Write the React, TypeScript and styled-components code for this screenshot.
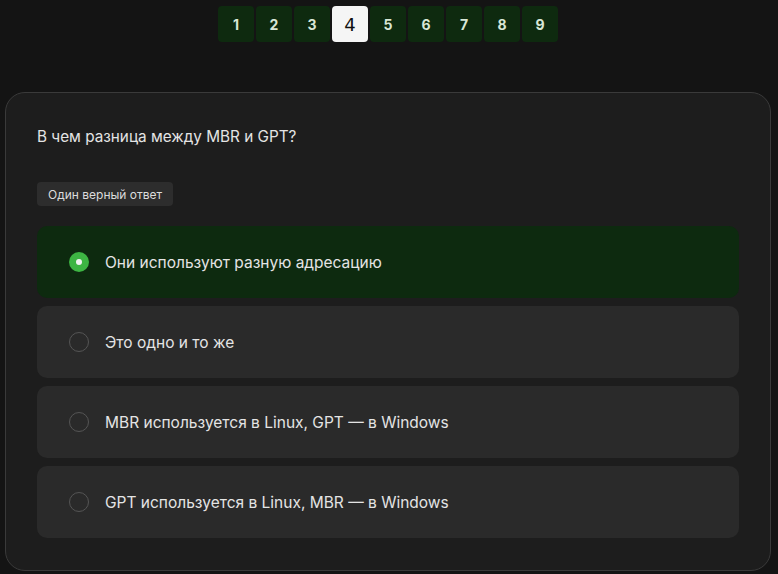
import React from "react";
import styled, { createGlobalStyle } from "styled-components";

const Global = createGlobalStyle`
  html, body { margin: 0; padding: 0; background: #141414; }
  body { font-family: Inter, "Noto Sans", sans-serif; color: #e6e6e6; }
  * { box-sizing: border-box; }
`;

const Page = styled.div`
  width: 778px;
  height: 574px;
  padding: 6px 7px 0 5px;
  display: flex;
  flex-direction: column;
  align-items: center;
  overflow: hidden;
`;

const Pager = styled.nav`
  display: flex;
  gap: 2px;
`;

const PageButton = styled.div<{ $active?: boolean }>`
  width: 36px;
  height: 36px;
  border-radius: 4px;
  display: flex;
  align-items: center;
  justify-content: center;
  background: ${(p) => (p.$active ? "#f5f5f5" : "#0e2a0f")};
  color: ${(p) => (p.$active ? "#111" : "#d8e6d6")};
  font-family: ${(p) => (p.$active ? "\"DejaVu Sans\", sans-serif" : "Inter, sans-serif")};
  font-size: ${(p) => (p.$active ? "18px" : "14px")};
  font-weight: ${(p) => (p.$active ? 400 : 700)};
`;

const Card = styled.section`
  margin-top: 50px;
  width: 766px;
  align-self: flex-start;
  background: #1d1d1d;
  border: 1px solid #3a3a3a;
  border-radius: 20px;
  padding: 33px 31px 32px 31px;
  display: flex;
  flex-direction: column;
`;

const Question = styled.h2`
  margin: 0;
  font-size: 15.3px;
  font-weight: 400;
  line-height: 22px;
  color: #e4e4e4;
`;

const Badge = styled.span`
  align-self: flex-start;
  margin-top: 34px;
  height: 24px;
  padding: 0 11px;
  display: flex;
  align-items: center;
  background: #2d2d2d;
  border-radius: 4px;
  font-size: 12px;
  color: #dcdcdc;
`;

const Options = styled.div`
  margin-top: 20px;
  display: flex;
  flex-direction: column;
  gap: 8px;
`;

const Option = styled.div<{ $selected?: boolean }>`
  height: 72px;
  border-radius: 10px;
  padding: 0 32px;
  display: flex;
  align-items: center;
  gap: 16px;
  background: ${(p) => (p.$selected ? "#0d2a0f" : "#2a2a2a")};
  font-size: 15.5px;
  color: #e4e4e4;
`;

const Radio = styled.span<{ $checked?: boolean }>`
  width: 20px;
  height: 20px;
  border-radius: 50%;
  flex: none;
  display: flex;
  align-items: center;
  justify-content: center;
  background: ${(p) => (p.$checked ? "#3db543" : "transparent")};
  border: ${(p) => (p.$checked ? "none" : "1px solid #555")};
  &::after {
    content: "";
    display: ${(p) => (p.$checked ? "block" : "none")};
    width: 6px;
    height: 6px;
    border-radius: 50%;
    background: #f2f2f2;
  }
`;

const pages = [1, 2, 3, 4, 5, 6, 7, 8, 9];
const answers = [
  "Они используют разную адресацию",
  "Это одно и то же",
  "MBR используется в Linux, GPT — в Windows",
  "GPT используется в Linux, MBR — в Windows",
];

export default function App() {
  return (
    <>
      <Global />
      <Page>
        <Pager>
          {pages.map((n) => (
            <PageButton key={n} $active={n === 4}>
              {n}
            </PageButton>
          ))}
        </Pager>
        <Card>
          <Question>В чем разница между MBR и GPT?</Question>
          <Badge>Один верный ответ</Badge>
          <Options>
            {answers.map((a, i) => (
              <Option key={a} $selected={i === 0}>
                <Radio $checked={i === 0} />
                {a}
              </Option>
            ))}
          </Options>
        </Card>
      </Page>
    </>
  );
}
